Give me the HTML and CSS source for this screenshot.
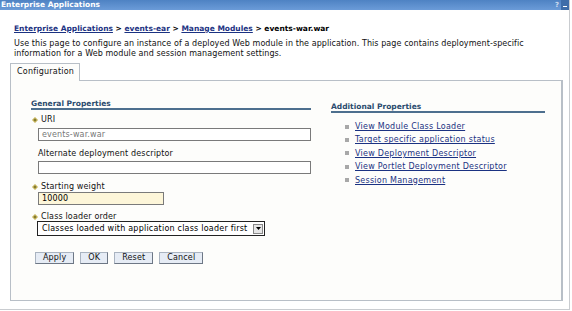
FILE: index.html
```html
<!DOCTYPE html>
<html>
<head>
<meta charset="utf-8">
<link rel="stylesheet" href="styles.css">
</head>
<body>
<div class="page">
  <div class="titlebar">
    <span class="title">Enterprise Applications</span>
    <span class="tb-icons"><span class="tb-help">?</span><span class="tb-min"></span></span>
  </div>
  <div class="content">
    <div class="crumbs"><a href="#">Enterprise Applications</a> &gt; <a href="#">events-ear</a> &gt; <a href="#">Manage Modules</a> &gt; <span class="cur">events-war.war</span></div>
    <p class="desc">Use this page to configure an instance of a deployed Web module in the application. This page contains deployment-specific information for a Web module and session management settings.</p>
    <div class="tabs"><span class="tab">Configuration</span></div>
    <div class="panel">
      <div class="col-left">
        <h3 class="heading">General Properties</h3>
        <div class="field f-uri">
          <div class="label req"><svg class="req-ic" width="6" height="6" viewBox="0 0 6 6"><path d="M3 0 L6 3 L3 6 L0 3 Z" fill="#bfae55"/><circle cx="3" cy="3" r="1" fill="#6f6a28"/></svg>URI</div>
          <div class="input ro">events-war.war</div>
        </div>
        <div class="field f-alt">
          <div class="label">Alternate deployment descriptor</div>
          <div class="input"></div>
        </div>
        <div class="field f-sw">
          <div class="label req"><svg class="req-ic" width="6" height="6" viewBox="0 0 6 6"><path d="M3 0 L6 3 L3 6 L0 3 Z" fill="#bfae55"/><circle cx="3" cy="3" r="1" fill="#6f6a28"/></svg>Starting weight</div>
          <div class="input short">10000</div>
        </div>
        <div class="field f-clo">
          <div class="label req"><svg class="req-ic" width="6" height="6" viewBox="0 0 6 6"><path d="M3 0 L6 3 L3 6 L0 3 Z" fill="#bfae55"/><circle cx="3" cy="3" r="1" fill="#6f6a28"/></svg>Class loader order</div>
          <div class="select"><span class="sel-text">Classes loaded with application class loader first</span><span class="sel-btn"><svg width="5" height="3" viewBox="0 0 5 3"><path d="M0 0 H5 L2.5 3 Z" fill="#000"/></svg></span></div>
        </div>
        <div class="buttons">
          <span class="btn">Apply</span>
          <span class="btn">OK</span>
          <span class="btn">Reset</span>
          <span class="btn">Cancel</span>
        </div>
      </div>
      <div class="col-right">
        <h3 class="heading">Additional Properties</h3>
        <ul class="links">
          <li><a href="#">View Module Class Loader</a></li>
          <li><a href="#">Target specific application status</a></li>
          <li><a href="#">View Deployment Descriptor</a></li>
          <li><a href="#">View Portlet Deployment Descriptor</a></li>
          <li><a href="#">Session Management</a></li>
        </ul>
      </div>
    </div>
  </div>
</div>
</body>
</html>
```

FILE: styles.css
```css
* { box-sizing: border-box; }
html, body { margin: 0; padding: 0; background: #fff; }
body {
  font-family: "DejaVu Sans", Verdana, sans-serif;
  font-size: 8px;
  letter-spacing: 0.15px;
  color: #000;
  width: 572px;
  height: 311px;
  overflow: hidden;
}
.page {
  width: 570px;
  height: 310px;
  border-right: 1px solid #c9ccd0;
  border-bottom: 1px solid #c9ccd0;
}
.titlebar {
  height: 10px;
  background: linear-gradient(#4e82c3, #6b9bd8);
  display: flex;
  justify-content: space-between;
  align-items: center;
  color: #fff;
}
.title {
  font-weight: bold;
  font-size: 7.5px;
  letter-spacing: 0;
  padding-left: 1px;
  line-height: 10px;
}
.tb-icons { display: flex; align-items: center; gap: 2px; height: 10px; }
.tb-help {
  color: #cfdcef;
  font-size: 7px;
  font-weight: bold;
  line-height: 9px;
  letter-spacing: 0;
}
.tb-min {
  width: 8px; height: 10px;
  background: #3e6da9;
  position: relative;
}
.tb-min::after {
  content: "";
  position: absolute;
  left: 2px; right: 2px; top: 6px;
  height: 1px;
  background: #fff;
}
.content { padding: 0 0 0 10px; }
.crumbs {
  margin: 14px 0 0 4px;
  font-size: 7.5px;
  font-weight: bold;
  letter-spacing: 0;
  line-height: 10px;
}
.crumbs a { color: #1b3282; }
.crumbs .cur { color: #000; }
.desc {
  margin: 5px 0 0 4px;
  line-height: 10px;
  letter-spacing: 0.08px;
  width: 548px;
  color: #111;
}
.tabs { margin-top: 4px; display: flex; position: relative; z-index: 1; margin-bottom: -1px; }
.tab {
  display: inline-block;
  height: 18px;
  width: 70px;
  border: 1px solid #b8bfc7;
  border-bottom: none;
  background: #fdfdfb;
  padding: 3px 0 0 6px;
  letter-spacing: 0.22px;
  line-height: 10px;
  color: #111;
}
.panel {
  width: 553px;
  height: 221px;
  border: 1px solid #b8bfc7;
  border-right: 2px solid #b8bfc7;
  background: #fdfdfb;
  display: flex;
  padding: 18px 0 0 20px;
  gap: 20px;
}
.col-left { width: 280px; }
.col-right { width: 214px; padding-top: 3px; }
.heading {
  margin: 0;
  font-size: 7.5px;
  font-weight: bold;
  letter-spacing: 0;
  color: #2b4b6e;
  line-height: 9px;
  border-bottom: 2px solid #4d6f8e;
}
.label { line-height: 10px; padding-left: 7px; color: #111; display: flex; align-items: center; }
.label.req { padding-left: 1px; }
.req-ic { margin-right: 3px; }
.f-uri { margin-top: 5px; }
.f-alt { margin-top: 8px; }
.f-sw { margin-top: 8px; }
.f-clo { margin-top: 7px; }
.f-uri .input { margin-top: 3px; }
.f-alt .input { margin-top: 2px; }
.f-sw .input { margin-top: 0; }
.f-clo .label { line-height: 9px; }
.input {
  margin-left: 7px;
  width: 273px;
  height: 13px;
  border: 1px solid #7a7a7a;
  background: #fff;
  padding: 0 3px;
  line-height: 11px;
}
.input.ro { color: #777; }
.input.short { width: 126px; background: #fdf6d9; }
.select {
  margin-left: 6px;
  width: 228px;
  height: 15px;
  border: 1px solid #222;
  background: #fff;
  display: flex;
  justify-content: space-between;
  align-items: center;
  padding: 0 1px 0 4px;
  letter-spacing: 0.22px;
}
.sel-btn {
  width: 10px; height: 10px;
  background: #e6e6e6;
  border: 1px solid #888;
  display: flex; align-items: center; justify-content: center;
}
.buttons { margin: 16px 0 0 4px; display: flex; gap: 6px; }
.btn {
  height: 12px;
  border: 1px solid #a9b3c0;
  border-right-color: #6d7785;
  border-bottom-color: #6d7785;
  background: #e6ecf5;
  padding: 0 7px;
  line-height: 10px;
  color: #111;
}
.links { list-style: none; margin: 7px 0 0 14px; padding: 0; }
.links li { line-height: 13.4px; height: 13.4px; display: flex; align-items: center; }
.links li::before {
  content: "";
  width: 4px; height: 4px;
  background: #a8a8a8;
  margin-right: 6px;
}
.links a { color: #1b3282; letter-spacing: 0.25px; }
```
